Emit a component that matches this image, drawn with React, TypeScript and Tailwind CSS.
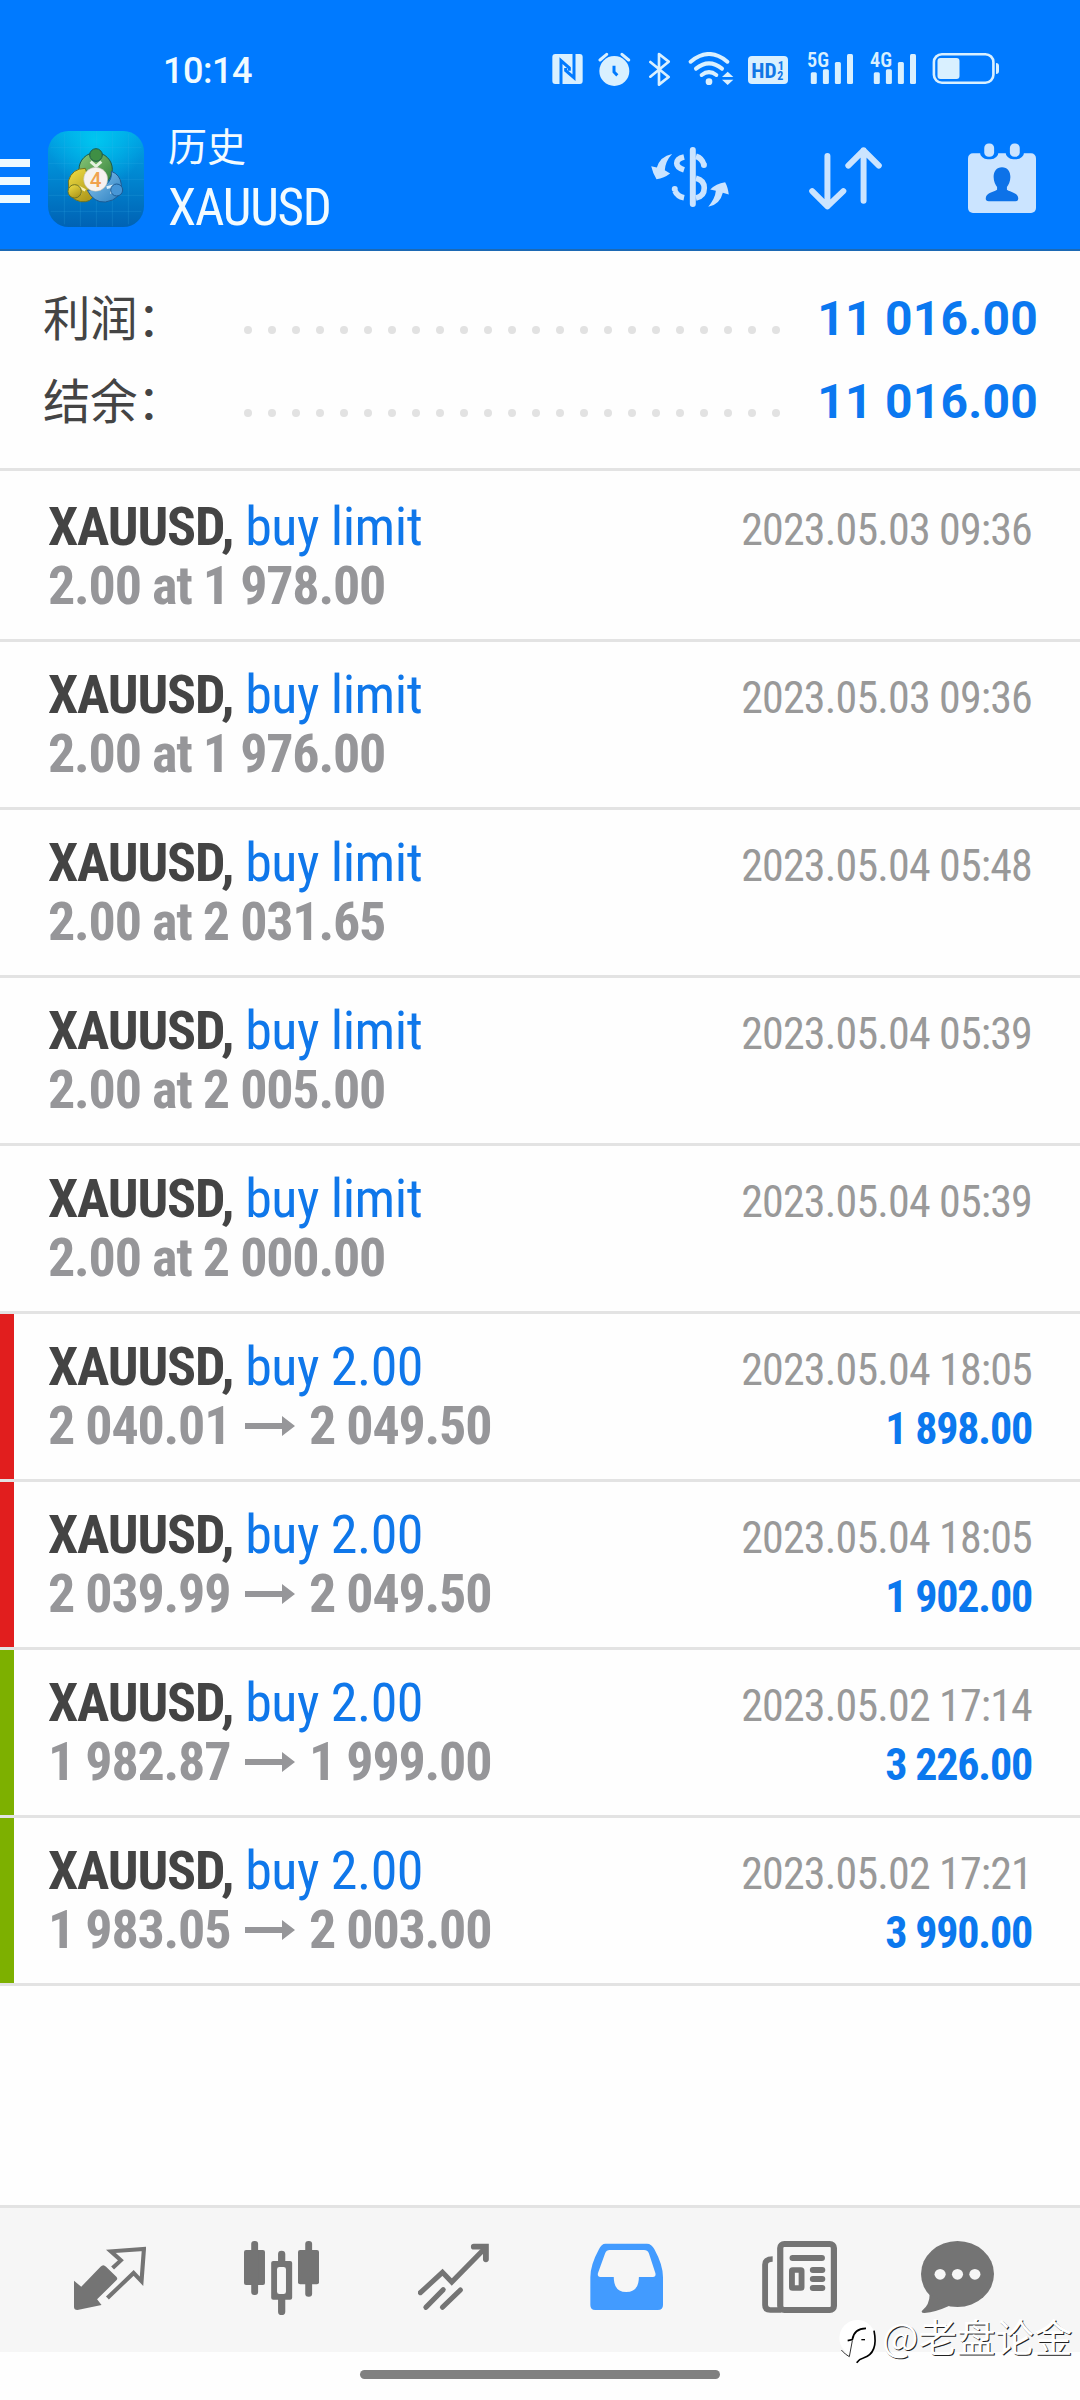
import React from 'react';

interface Deal {
  action: string;
  detail?: string;
  from?: string;
  to?: string;
  time: string;
  profit?: string;
  mark?: 'red' | 'green';
}

const DEALS: Deal[] = [
  { action: 'buy limit', detail: '2.00 at 1 978.00', time: '2023.05.03 09:36' },
  { action: 'buy limit', detail: '2.00 at 1 976.00', time: '2023.05.03 09:36' },
  { action: 'buy limit', detail: '2.00 at 2 031.65', time: '2023.05.04 05:48' },
  { action: 'buy limit', detail: '2.00 at 2 005.00', time: '2023.05.04 05:39' },
  { action: 'buy limit', detail: '2.00 at 2 000.00', time: '2023.05.04 05:39' },
  { action: 'buy 2.00', from: '2 040.01', to: '2 049.50', time: '2023.05.04 18:05', profit: '1 898.00', mark: 'red' },
  { action: 'buy 2.00', from: '2 039.99', to: '2 049.50', time: '2023.05.04 18:05', profit: '1 902.00', mark: 'red' },
  { action: 'buy 2.00', from: '1 982.87', to: '1 999.00', time: '2023.05.02 17:14', profit: '3 226.00', mark: 'green' },
  { action: 'buy 2.00', from: '1 983.05', to: '2 003.00', time: '2023.05.02 17:21', profit: '3 990.00', mark: 'green' },
];

const SUMMARY = [
  { label: '利润：', value: '11 016.00' },
  { label: '结余：', value: '11 016.00' },
];

const MARKS = { red: 'bg-[#e11e1e]', green: 'bg-[#7db000]' };

const Signal = ({ label, className }: { label: string; className: string }) => (
  <svg className={className} width="47" height="38" viewBox="0 -4 47 38" fill="currentColor">
    <text x="0" y="15" fontSize="20" fontWeight="600" textLength="22" lengthAdjust="spacingAndGlyphs" className="font-['Roboto_Condensed',sans-serif]">{label}</text>
    <rect x="3.8" y="20.3" width="6" height="11.7" rx="1.5" />
    <rect x="15.9" y="17.3" width="6" height="14.7" rx="1.5" />
    <rect x="27.9" y="10" width="6" height="22" rx="1.5" />
    <rect x="40" y="2" width="6" height="30" rx="1.5" />
  </svg>
);

const StatusBar = () => (
  <div className="flex h-[107px] items-start text-[#d9f0ff]">
    <span className="ml-[163px] mt-[50px] w-[389px] font-['Roboto',sans-serif] text-[36px] font-medium leading-[42px] tracking-[-0.5px] text-[#f0fbff]">10:14</span>
    {/* NFC */}
    <svg className="mt-[52px]" width="31" height="34" viewBox="20 36 93 102" fill="none">
      <rect x="21" y="42" width="91" height="90" rx="9" fill="currentColor" />
      <path d="M47 132V62L72 84V92" stroke="#007aff" strokeWidth="9" />
      <path d="M86 42V113L61 92V84" stroke="#007aff" strokeWidth="9" />
    </svg>
    {/* alarm */}
    <svg className="ml-[15px] mt-[52px]" width="33" height="34" viewBox="161 36 99 102" fill="none" strokeLinecap="round">
      <circle cx="210" cy="93" r="45" fill="currentColor" />
      <path d="M167 60L187 43M233 43L253 60" stroke="currentColor" strokeWidth="9" />
      <path d="M209 77V96L219 106" stroke="#007aff" strokeWidth="9" strokeLinecap="butt" />
    </svg>
    {/* bluetooth */}
    <svg className="ml-[17px] mt-[52px]" width="23" height="34" viewBox="309 36 69 102" fill="none" stroke="currentColor" strokeWidth="8" strokeLinecap="round" strokeLinejoin="round">
      <path d="M316 66L371 111L342 134V42L371 65L316 110" />
    </svg>
    {/* wifi */}
    <svg className="ml-[17px] mt-[52px]" width="46" height="34" viewBox="430 36 138 102" fill="none" stroke="currentColor" strokeWidth="12" strokeLinecap="round">
      <path d="M438 65Q493 19 548 65" />
      <path d="M454 86Q493 54 532 86" />
      <path d="M471 105Q493 88 515 105" />
      <circle cx="493" cy="125" r="10" fill="currentColor" stroke="none" />
      <path d="M549 95L566 111H532ZM532 119H566L549 135Z" fill="currentColor" stroke="none" />
    </svg>
    {/* HD voice */}
    <svg className="ml-[13px] mt-[52px]" width="42" height="34" viewBox="606 36 126 102">
      <rect x="609" y="48" width="120" height="84" rx="12" fill="currentColor" />
      <g fill="#1277e6" fontWeight="700" className="font-['Roboto_Condensed',sans-serif]">
        <text x="619" y="113" fontSize="62" textLength="76" lengthAdjust="spacingAndGlyphs">HD</text>
        <text x="698" y="89" fontSize="38">1</text>
        <text x="697" y="120" fontSize="36">2</text>
      </g>
    </svg>
    <Signal label="5G" className="ml-[18px] mt-[48px]" />
    <Signal label="4G" className="ml-[16px] mt-[48px]" />
    <svg className="ml-[15px] mt-[52px]" width="68" height="34" viewBox="0 0 68 34" fill="none">
      <rect x="1.9" y="2.2" width="59.5" height="28.5" rx="8" stroke="currentColor" strokeWidth="2.6" />
      <rect x="5.5" y="6" width="22" height="21" rx="3" fill="currentColor" />
      <path d="M64 11Q67 11 67 14V19Q67 22 64 22Z" fill="currentColor" />
    </svg>
  </div>
);

const AppLogo = () => (
  <svg className="ml-[18px] mt-[24px]" width="96" height="96" viewBox="0 0 288 288">
    <defs>
      <linearGradient id="tile" x1="0" y1="0" x2="0" y2="1">
        <stop offset="0" stopColor="#00a6e6" />
        <stop offset="0.45" stopColor="#0088d2" />
        <stop offset="1" stopColor="#0062b4" />
      </linearGradient>
      <radialGradient id="glow" cx="0.5" cy="0.1" r="0.5">
        <stop offset="0" stopColor="#00d0f4" stopOpacity="0.8" />
        <stop offset="1" stopColor="#00d0f4" stopOpacity="0" />
      </radialGradient>
      <linearGradient id="green" x1="0" y1="0" x2="1" y2="1">
        <stop offset="0" stopColor="#8cc878" />
        <stop offset="1" stopColor="#2f7f3a" />
      </linearGradient>
      <linearGradient id="yellow" x1="0" y1="0" x2="0.6" y2="1">
        <stop offset="0" stopColor="#f2e046" />
        <stop offset="1" stopColor="#b09a1c" />
      </linearGradient>
      <linearGradient id="blue" x1="0" y1="0" x2="1" y2="1">
        <stop offset="0" stopColor="#8cc8f0" />
        <stop offset="1" stopColor="#2b7fc0" />
      </linearGradient>
    </defs>
    <rect width="288" height="288" rx="62" fill="url(#tile)" />
    <rect width="288" height="288" rx="62" fill="url(#glow)" />
    <path d="M49 8V280M97 2V286M145 0V288M193 2V286M241 8V280M8 49H280M2 97H286M0 145H288M2 193H286M8 241H280" stroke="#39b8ee" strokeOpacity="0.28" strokeWidth="2" />
    <g stroke="#1d5a4a" strokeWidth="3">
      <circle cx="143" cy="115" r="50" fill="url(#green)" />
      <path d="M112 112Q72 112 61 150Q58 205 98 212Q130 216 138 190Z" fill="url(#yellow)" stroke="#6f7420" />
      <path d="M118 178Q138 216 172 213Q222 206 220 160Q216 130 190 121Q196 170 118 178Z" fill="url(#blue)" stroke="#1c5b94" />
      <path d="M128 92L144 106L160 92" fill="none" stroke="#e4f2df" strokeWidth="9" />
      <path d="M96 190V170L112 178" fill="none" stroke="#f6f0b0" strokeWidth="8" />
      <path d="M176 170L192 166L190 188" fill="none" stroke="#d8eefa" strokeWidth="8" />
      <circle cx="144" cy="72" r="19" fill="#3f8f45" />
      <circle cx="80" cy="181" r="20" fill="url(#yellow)" stroke="#6f7420" />
      <circle cx="206" cy="177" r="18" fill="#4796d6" stroke="#1c5b94" />
    </g>
    <circle cx="143" cy="145" r="36" fill="#f6f2f0" stroke="#b9b9a8" strokeWidth="1.5" />
    <text x="143" y="168" textAnchor="middle" fontSize="62" fontWeight="500" fill="#f0a24e" className="font-['Roboto',sans-serif]">4</text>
  </svg>
);

const Header = () => (
  <header className="h-[251px] border-b-2 border-[#1c69b4] bg-[#007aff]">
    <StatusBar />
    <div className="flex items-start text-[#cbe4ff]">
      <div className="mt-[52px] flex w-[30px] flex-col gap-[10px]">
        <span className="h-2 bg-[#ecfaff]" />
        <span className="h-2 bg-[#ecfaff]" />
        <span className="h-2 bg-[#ecfaff]" />
      </div>
      <AppLogo />
      <div className="ml-[24px] mt-[17px] w-[483px] text-[#f2fbff]">
        <div className="font-['Noto_Sans_CJK_SC',sans-serif] text-[39px] leading-[40px]">历史</div>
        <div className="mt-[19px] font-['Roboto_Condensed',sans-serif] text-[51px] font-[450] leading-[50px] tracking-[-1.2px]">XAUUSD</div>
      </div>
      <svg className="mt-[40px]" width="78" height="60" viewBox="33 50 234 181" fill="none" stroke="currentColor" strokeWidth="17">
        <path d="M158.500 59V222" strokeWidth="18" strokeLinecap="round" />
        <path d="M132 80Q110 85 110 99Q110 112 132 119" />
        <path d="M132 203Q112 199 105 183" />
        <path d="M168 78Q187 84 192 104" />
        <path d="M168 144Q193 150 193 174Q193 199 168 204" />
        <g fill="currentColor" stroke="none">
          <circle cx="104" cy="177" r="9" />
          <circle cx="192" cy="104" r="9" />
          <path d="M96 71Q60 78 50 112L33 108Q38 130 49 147Q72 144 90 130L74 120Q76 92 96 71Z" />
          <path d="M205 230Q226 205 228 182L211 178Q228 160 256 156Q264 170 267 193L249 188Q240 225 205 230Z" />
        </g>
      </svg>
      <svg className="ml-[80px] mt-[40px]" width="73" height="63" viewBox="508 51 219 190" fill="none" stroke="currentColor" strokeWidth="18" strokeLinecap="round" strokeLinejoin="round">
        <path d="M563 78V230M517 184L563 230L611 184" />
        <path d="M672 213V61M626 107L672 61L718 107" />
      </svg>
      <svg className="ml-[86px] mt-[36px]" width="68" height="71" viewBox="0 0 69 71">
        <rect y="10" width="69" height="60.500" rx="5" fill="currentColor" />
        <rect x="12" y="-4" width="19" height="20" rx="8" fill="#007aff" />
        <rect x="38" y="-4" width="19" height="20" rx="8" fill="#007aff" />
        <rect x="16.500" y="0" width="10" height="13.500" rx="4.500" fill="currentColor" />
        <rect x="42.500" y="0" width="10" height="13.500" rx="4.500" fill="currentColor" />
        <path d="M34.500 24C40 24 43 28 43 34C43 39 41 42 39.500 44V47C44 50 51 50 51 56Q51 58.500 48 58.500H21Q18 58.500 18 56C18 50 25 50 29.500 47V44C28 42 26 39 26 34C26 28 29 24 34.500 24Z" fill="#0d72e8" />
      </svg>
    </div>
  </header>
);

const Summary = () => (
  <section className="h-[220px] border-b-3 border-[#e3e3e3] pt-[26px]">
    {SUMMARY.map((row) => (
      <div key={row.label} className="flex h-[83px] pl-[43px] pr-[42px]">
        <span className="w-[201px] font-['Noto_Sans_CJK_SC',sans-serif] text-[47.5px] leading-[78px] tracking-[-0.5px] text-[#444]">{row.label}</span>
        <div className="mt-[49px] flex gap-4">
          {Array.from({ length: 23 }, (_, i) => (
            <span key={i} className="size-2 rounded-full bg-[#e2e2e2]" />
          ))}
        </div>
        <span className="ml-auto whitespace-nowrap font-['Roboto',sans-serif] text-[48px] font-bold leading-[83px] tracking-[0.25px] text-[#0b78f0]">{row.value}</span>
      </div>
    ))}
  </section>
);

const DealRow = ({ deal }: { deal: Deal }) => (
  <div className="flex h-[168px] border-b-3 border-[#e3e3e3] font-['Roboto_Condensed',sans-serif] first:h-[171px] first:pt-[3px]">
    <div className={`w-[14px] ${deal.mark ? MARKS[deal.mark] : ''}`} />
    <div className="flex-1 whitespace-nowrap pl-[34px] pr-[48px] pt-[23px] text-[54px] leading-[59px]">
      <div className="flex h-[59px] items-baseline justify-between">
        <span className="tracking-[-0.5px] text-[#0f77ea]">
          <b className="font-bold tracking-[-1.15px] text-[#444]">XAUUSD,</b> {deal.action}
        </span>
        <span className="text-[44px] tracking-[-0.84px] text-[#999]">{deal.time}</span>
      </div>
      <div className="flex h-[59px] items-baseline justify-between font-bold">
        <span className="flex items-baseline tracking-[-1.2px] text-[#969699]">
          {deal.detail ?? (
            <>
              <span className="w-[197px]">{deal.from}</span>
              <svg className="mr-[14px] self-center" width="50" height="20" viewBox="0 0 50 20" fill="currentColor">
                <path d="M0 7H37V0L50 10L37 20V13H0Z" />
              </svg>
              <span>{deal.to}</span>
            </>
          )}
        </span>
        <span className="text-[44px] tracking-[-1.2px] text-[#0b78ee]">{deal.profit}</span>
      </div>
    </div>
  </div>
);

const TabBar = () => (
  <nav className="flex h-[147px] border-t-3 border-[#e3e3e3] bg-[#f6f6f6] pl-[74px] pt-[33px] text-[#747474]">
    {/* quotes */}
    <svg width="72" height="74" viewBox="215 153 209 222" preserveAspectRatio="none" fill="none">
      <path d="M215 272L236 290L292 230Q300 221 308 230L338 260Q343 266 338 271L282 328L295 345L225 360Q215 360 215 351Z" fill="currentColor" />
      <path d="M327 234L351 211L322 184L418 177L411 274L388 249L312 324" stroke="currentColor" strokeWidth="12" />
    </svg>
    {/* charts */}
    <svg className="ml-[98px]" width="75" height="74" viewBox="708 153 218 222" preserveAspectRatio="none" fill="currentColor">
      <rect x="708" y="180" width="61" height="105" rx="6" />
      <rect x="729" y="153" width="20" height="162" rx="9" />
      <path fillRule="evenodd" d="M793 213H842Q848 213 848 219V323Q848 329 842 329H793Q787 329 787 323V219Q787 213 793 213ZM811 231Q804 231 804 238V305Q804 312 811 312H823Q830 312 830 305V238Q830 231 823 231Z" />
      <path d="M807 215V192Q807 182 817 182Q828 182 828 192V215ZM807 327H828V365Q828 375 817 375Q807 375 807 365Z" />
      <rect x="865" y="180" width="61" height="103" rx="6" />
      <rect x="886" y="153" width="20" height="167" rx="9" />
    </svg>
    {/* trade */}
    <svg className="ml-[99px]" width="71" height="74" viewBox="1214 153 206 222" preserveAspectRatio="none" fill="none" stroke="currentColor" strokeWidth="15" strokeLinecap="round">
      <path d="M1221 308L1285 247L1312 276L1409 174" strokeLinejoin="miter" />
      <path d="M1376 170H1411V208" strokeWidth="17" />
      <path d="M1237 352L1287 299M1285 352L1337 300" />
    </svg>
    {/* history, active tab */}
    <svg className="ml-[101px]" width="73" height="74" viewBox="145 153 212 222" preserveAspectRatio="none">
      <path fill="#429bff" fillRule="evenodd" d="M190 161H310Q324 161 332 178Q357 225 357 262V345Q357 360 342 360H160Q146 360 146 345V262Q146 225 171 178Q178 161 190 161ZM202 180Q193 180 189 190L168 250Q166 261 175 261H214Q214 306 250 306Q287 306 287 261H328Q337 261 335 250L316 190Q312 180 302 180Z" />
    </svg>
    {/* news */}
    <svg className="ml-[99px]" width="75" height="74" viewBox="646 153 218 222" preserveAspectRatio="none" fill="none" stroke="currentColor" strokeWidth="18">
      <rect x="699" y="162" width="156" height="198" rx="12" />
      <path d="M677 207Q655 207 655 224V345Q655 360 670 360H702" strokeWidth="17" />
      <path d="M735 204H820M794 240H821M794 267H821M794 294H821" strokeLinecap="round" />
      <rect x="733" y="240" width="28" height="54" rx="2" strokeWidth="17" />
    </svg>
    {/* chat */}
    <svg className="ml-[84px]" width="73" height="74" viewBox="1108 153 210 222" preserveAspectRatio="none" fill="currentColor">
      <ellipse cx="1213" cy="252" rx="105" ry="99" />
      <path d="M1133 312Q1133 345 1111 362Q1107 369 1118 369Q1150 366 1190 347Z" />
      <g fill="#f6f6f6">
        <circle cx="1163" cy="253" r="16" />
        <circle cx="1213" cy="253" r="16" />
        <circle cx="1263" cy="253" r="16" />
      </g>
    </svg>
  </nav>
);

const Watermark = () => (
  <div className="absolute left-[838px] top-[2317px] flex">
    <svg width="42" height="48" viewBox="24 21 126 144" fill="none">
      <circle cx="82" cy="84" r="54" fill="#fff" />
      <path d="M80 138V158Q140 140 136 84Z" fill="#fff" />
      <path d="M53 92L67 89Q72 55 108 55" stroke="#000" strokeWidth="5" />
      <path d="M67 92L58 140Q46 134 34 120" stroke="#333" strokeWidth="3" />
      <path d="M94 89H105" stroke="#000" strokeWidth="4" />
      <path d="M132 62Q146 130 100 144Q88 147 80 158" stroke="#000" strokeWidth="5" />
    </svg>
    <span className="ml-[2px] whitespace-nowrap font-['Noto_Sans_CJK_SC',sans-serif] text-[38.5px] leading-[37px] text-white [text-shadow:1px_1px_0.500px_#222]">@老盘论金</span>
  </div>
);

export default function App() {
  return (
    <div className="relative flex h-[2400px] w-[1080px] flex-col overflow-hidden bg-[#fefefe]">
      <Header />
      <Summary />
      <main className="flex-1">
        {DEALS.map((deal, i) => (
          <DealRow key={i} deal={deal} />
        ))}
      </main>
      <TabBar />
      <div className="flex h-12 justify-center pt-[18px]">
        <span className="h-[9px] w-[360px] rounded-full bg-[#808080]" />
      </div>
      <Watermark />
    </div>
  );
}
